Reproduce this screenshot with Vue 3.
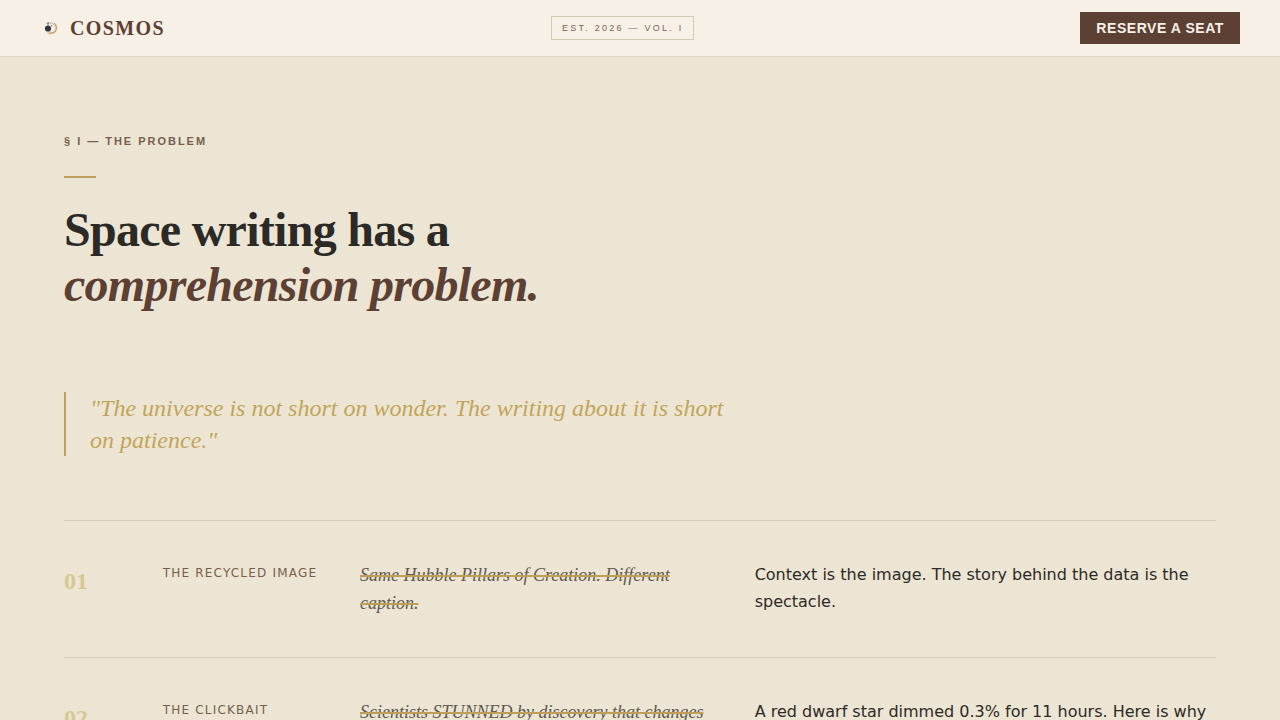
<script setup>
const rows = [
  {
    number: '01',
    label: 'The Recycled Image',
    before: 'Same Hubble Pillars of Creation. Different caption.',
    after: 'Context is the image. The story behind the data is the spectacle.',
  },
  {
    number: '02',
    label: 'The Clickbait',
    before: 'Scientists STUNNED by discovery that changes',
    after: 'A red dwarf star dimmed 0.3% for 11 hours. Here is why',
  },
]
</script>

<template>
  <div class="page">
    <header class="bar">
      <a class="brand" href="#">
        <svg class="mark" viewBox="0 0 22 22" aria-hidden="true">
          <path d="M14 6a5.500 5.500 0 1 1-6.500 9.500" fill="none" stroke="#d0a96c" stroke-width="1.400" />
          <path d="M15 8a4.500 4.500 0 0 1-5.500 7" fill="none" stroke="#b9a184" stroke-width=".8" />
          <path d="M9 6a4 4 0 0 1 5 2" fill="none" stroke="#a8a29a" stroke-width=".8" />
          <circle cx="8" cy="11.500" r="3.100" fill="#33363c" />
          <circle cx="8" cy="6.500" r="1.200" fill="#8b8884" />
          <circle cx="11.500" cy="8.500" r=".8" fill="#8b8884" />
        </svg>
        <span>COSMOS</span>
      </a>
      <span class="edition">EST. 2026 — VOL. I</span>
      <button class="reserve" type="button">RESERVE A SEAT</button>
    </header>

    <main class="problem">
      <p class="eyebrow">§ I — THE PROBLEM</p>
      <div class="rule"></div>
      <h1>Space writing has a<br /><em>comprehension problem.</em></h1>
      <blockquote>"The universe is not short on wonder. The writing about it is short on patience."</blockquote>

      <section class="rows">
        <article v-for="row in rows" :key="row.number" class="row">
          <span class="number">{{ row.number }}</span>
          <h2 class="label">{{ row.label }}</h2>
          <p class="before"><s>{{ row.before }}</s></p>
          <p class="after">{{ row.after }}</p>
        </article>
      </section>
    </main>
  </div>
</template>

<style>
body {
  margin: 0;
  background: #ede5d3;
}
</style>

<style scoped>
.page {
  min-height: 100vh;
  background: #ede5d3;
  color: #2c2a26;
  font-family: "DejaVu Sans", sans-serif;
}
.bar {
  display: flex;
  align-items: center;
  justify-content: space-between;
  height: 56px;
  padding: 0 40px;
  background: #f6f0e7;
  border-bottom: 1px solid #e0d8c4;
}
.brand {
  display: flex;
  align-items: center;
  gap: 8px;
  color: #5c4033;
  font: bold 20px/28px "Liberation Serif", serif;
  letter-spacing: 0.07em;
  text-decoration: none;
}
.mark {
  width: 22px;
  height: 22px;
}
.edition {
  padding: 4px 10px;
  border: 1px solid #d2cbb2;
  color: #7a6652;
  font: 9px/14px "Liberation Sans", sans-serif;
  letter-spacing: 0.25em;
}
.reserve {
  height: 32px;
  padding: 0 16px;
  border: 0;
  background: #5c4033;
  color: #f7f0e8;
  font: bold 14px/20px "Liberation Sans", sans-serif;
  letter-spacing: 0.04em;
}
.problem {
  padding: 76px 64px;
}
.eyebrow {
  margin: 0;
  color: #755f4c;
  font: bold 11px/16px "Liberation Sans", sans-serif;
  letter-spacing: 0.18em;
}
.rule {
  width: 32px;
  height: 2px;
  margin: 27px 0 24px;
  background: #c0a060;
}
h1 {
  margin: 0;
  font: bold 48px/55px "Liberation Serif", serif;
  letter-spacing: -0.015em;
}
h1 em {
  color: #5c4033;
}
blockquote {
  max-width: 640px;
  margin: 80px 0 64px;
  padding-left: 24px;
  border-left: 2px solid #c0a058;
  color: #c2a45a;
  font: italic 24px/32px "Liberation Serif", serif;
}
.row {
  display: grid;
  grid-template-columns: repeat(12, minmax(0, 1fr));
  column-gap: 32px;
  padding: 40px 0;
  border-top: 1px solid #d5ccb9;
}
.number {
  color: #d6c894;
  font: bold 24px/40px "Liberation Serif", serif;
}
.label {
  grid-column: span 2;
  margin: 0;
  color: #755f4c;
  font-size: 12px;
  font-weight: normal;
  line-height: 24px;
  letter-spacing: 0.1em;
  text-transform: uppercase;
}
.before {
  grid-column: span 4;
  margin: 0;
  color: #5c5a50;
  font: italic 18px/28px "Liberation Serif", serif;
}
.before s {
  text-decoration: line-through 2px #bf9f58;
}
.after {
  grid-column: span 5;
  margin: 0;
  font-size: 16px;
  line-height: 27px;
}
</style>
